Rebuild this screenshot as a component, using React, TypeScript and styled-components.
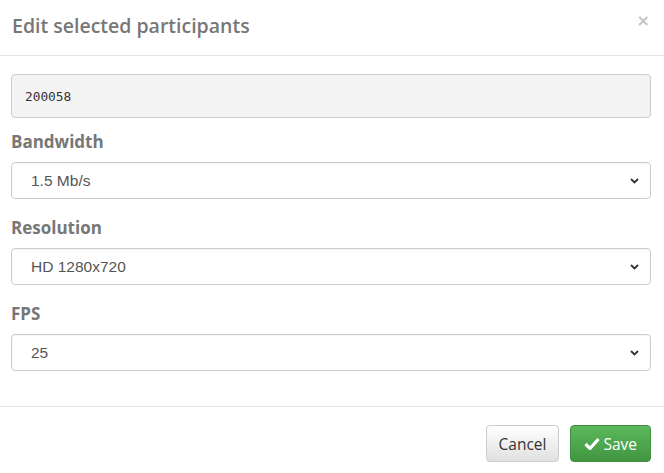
import React from 'react';
import styled, { createGlobalStyle } from 'styled-components';

const GlobalStyle = createGlobalStyle`
  html, body {
    margin: 0;
    padding: 0;
    background: #fff;
  }
  body {
    font-family: 'Open Sans', 'Noto Sans', sans-serif;
  }
`;

const Modal = styled.div`
  width: 664px;
  height: 473px;
  display: flex;
  flex-direction: column;
  background: #fff;
`;

const Header = styled.div`
  height: 56px;
  box-sizing: border-box;
  border-bottom: 1px solid #e5e5e5;
  display: flex;
  align-items: center;
  justify-content: space-between;
  padding: 0 14px 4px 12px;
`;

const Title = styled.h4`
  margin: 0;
  font-size: 19.5px;
  font-weight: 600;
  color: #777;
`;

const Close = styled.button`
  border: 0;
  background: none;
  padding: 0;
  margin-top: -10px;
  font-size: 16px;
  font-weight: 700;
  line-height: 1;
  color: #c4c4c4;
  cursor: pointer;
  font-family: 'DejaVu Sans', sans-serif;
`;

const Body = styled.div`
  flex: 1;
  padding: 18px 13px 0 11px;
  display: flex;
  flex-direction: column;
`;

const ReadOnly = styled.div`
  height: 44px;
  box-sizing: border-box;
  border: 1px solid #ccc;
  border-radius: 4px;
  background: #f3f3f3;
  display: flex;
  align-items: center;
  padding: 0 13px;
  font-family: 'DejaVu Sans Mono', monospace;
  font-size: 12.8px;
  color: #333;
`;

const Group = styled.div`
  display: flex;
  flex-direction: column;
  margin-top: 14px;
  & + & {
    margin-top: 19px;
  }
`;

const Label = styled.label`
  font-size: 17px;
  font-weight: 700;
  color: #777;
  line-height: 20px;
  margin-bottom: 10px;
`;

const SelectBox = styled.div`
  height: 37px;
  box-sizing: border-box;
  border: 1px solid #ccc;
  border-radius: 4px;
  display: flex;
  align-items: center;
  padding: 0 19px;
  font-family: 'Liberation Sans', Arial, sans-serif;
  font-size: 15.5px;
  color: #555;
  box-shadow: inset 0 1px 1px rgba(0, 0, 0, 0.04);
`;

const Chevron = styled.svg`
  margin-left: auto;
  margin-right: -8px;
  width: 9px;
  height: 6px;
`;

const Footer = styled.div`
  height: 67px;
  box-sizing: border-box;
  border-top: 1px solid #e5e5e5;
  display: flex;
  justify-content: flex-end;
  align-items: flex-start;
  gap: 11px;
  padding: 18px 13px 0 0;
`;

const Button = styled.button<{ $primary?: boolean }>`
  height: 37px;
  box-sizing: border-box;
  border-radius: 4px;
  padding: 0 ${(p) => (p.$primary ? '13px' : '12px')};
  font-family: 'Open Sans', 'Noto Sans', sans-serif;
  font-size: 15.5px;
  display: flex;
  align-items: center;
  gap: 3px;
  cursor: pointer;
  border: 1px solid ${(p) => (p.$primary ? '#3e8f3e' : '#ccc')};
  color: ${(p) => (p.$primary ? '#fff' : '#333')};
  background: ${(p) =>
    p.$primary
      ? 'linear-gradient(to bottom, #5cb85c 0%, #419641 100%)'
      : 'linear-gradient(to bottom, #fff 0%, #e0e0e0 100%)'};
`;

const Select = ({ value }: { value: string }) => (
  <SelectBox>
    {value}
    <Chevron viewBox="0 0 9 6">
      <path d="M1 1l3.5 3.5L8 1" fill="none" stroke="#333" strokeWidth="1.8" />
    </Chevron>
  </SelectBox>
);

export default function App() {
  return (
    <Modal>
      <GlobalStyle />
      <Header>
        <Title>Edit selected participants</Title>
        <Close>×</Close>
      </Header>
      <Body>
        <ReadOnly>200058</ReadOnly>
        <Group>
          <Label>Bandwidth</Label>
          <Select value="1.5 Mb/s" />
        </Group>
        <Group>
          <Label>Resolution</Label>
          <Select value="HD 1280x720" />
        </Group>
        <Group>
          <Label>FPS</Label>
          <Select value="25" />
        </Group>
      </Body>
      <Footer>
        <Button>Cancel</Button>
        <Button $primary>
          <svg width="16" height="13" viewBox="0 0 16 13">
            <path d="M1.5 7l4.5 4.5L14.5 2" fill="none" stroke="#fff" strokeWidth="3.2" />
          </svg>
          Save
        </Button>
      </Footer>
    </Modal>
  );
}
